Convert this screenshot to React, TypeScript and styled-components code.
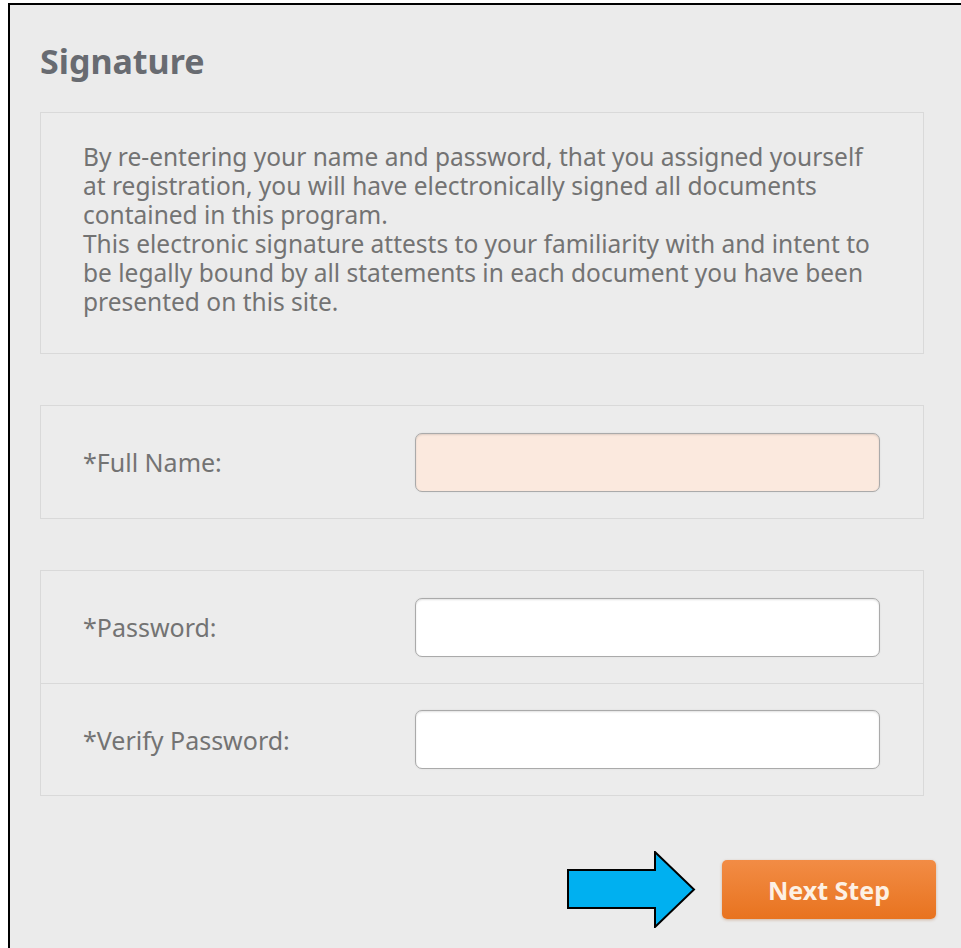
import styled, { createGlobalStyle } from 'styled-components'

const GlobalStyle = createGlobalStyle`
  html, body {
    margin: 0;
    padding: 0;
    background: #ffffff;
    overflow: hidden;
  }
  body {
    font-family: 'Noto Sans', 'Open Sans', 'Liberation Sans', sans-serif;
  }
`

const PANEL_BG = '#ebebeb'
const BOX_BG = '#ececec'
const BOX_BORDER = '#d9d9d9'
const TEXT = '#737373'

const Frame = styled.div`
  margin: 3px 0 0 8px;
  height: calc(100vh - 3px);
  box-sizing: border-box;
  border-top: 2px solid #000;
  border-left: 2px solid #000;
  background: ${PANEL_BG};
  padding: 36px 37px 0 30px;
  display: flex;
  flex-direction: column;
`

const Title = styled.h2`
  margin: 0 0 31px;
  font-size: 34px;
  line-height: 40px;
  font-weight: 700;
  color: #686b71;
`

const Box = styled.section`
  background: ${BOX_BG};
  border: 1px solid ${BOX_BORDER};
  margin-bottom: 51px;
`

const Notice = styled.div`
  padding: 29px 42px 37px;
  font-size: 24.5px;
  line-height: 29px;
  color: ${TEXT};
`

const Row = styled.div<{ $divider?: boolean }>`
  display: flex;
  align-items: center;
  height: 112px;
  box-sizing: border-box;
  padding: 0 43px 0 42px;
  border-top: ${(p) => (p.$divider ? `1px solid ${BOX_BORDER}` : 'none')};
`

const Label = styled.label`
  width: 332px;
  font-size: 25px;
  color: ${TEXT};
`

const Field = styled.input<{ $filled?: boolean }>`
  flex: 1;
  height: 59px;
  box-sizing: border-box;
  border: 1px solid #aaaaaa;
  border-radius: 7px;
  background: ${(p) => (p.$filled ? '#fbe9de' : '#ffffff')};
  box-shadow: inset 0 1px 2px rgba(0, 0, 0, 0.12),
    0 0 2px rgba(0, 0, 0, 0.08);
  outline: none;
`

const Footer = styled.div`
  display: flex;
  align-items: center;
  justify-content: flex-end;
  gap: 26px;
  margin: 4px -12px 0 0;
`

const NextButton = styled.button`
  width: 214px;
  height: 59px;
  border: none;
  border-radius: 5px;
  background: linear-gradient(#f28c45, #e8731f);
  box-shadow: 0 1px 3px rgba(160, 80, 20, 0.35);
  color: #fdf1e4;
  font-family: 'Noto Sans', 'Open Sans', sans-serif;
  font-size: 25px;
  font-weight: 700;
  cursor: pointer;
`

const Pointer = () => (
  <svg width="129" height="77" viewBox="0 0 129 77">
    <polygon
      points="1,19 88,19 88,1 127,38.5 88,76 88,57 1,57"
      fill="#00b0f0"
      stroke="#000"
      strokeWidth="2"
      strokeLinejoin="miter"
    />
  </svg>
)

export default function App() {
  return (
    <>
      <GlobalStyle />
      <Frame>
        <Title>Signature</Title>
        <Box>
          <Notice>
            By re-entering your name and password, that you assigned yourself
            at registration, you will have electronically signed all documents
            contained in this program.
            <br />
            This electronic signature attests to your familiarity with and
            intent to be legally bound by all statements in each document you
            have been presented on this site.
          </Notice>
        </Box>
        <Box>
          <Row>
            <Label>*Full Name:</Label>
            <Field $filled />
          </Row>
        </Box>
        <Box>
          <Row>
            <Label>*Password:</Label>
            <Field type="password" />
          </Row>
          <Row $divider>
            <Label>*Verify Password:</Label>
            <Field type="password" />
          </Row>
        </Box>
        <Footer>
          <Pointer />
          <NextButton type="button">Next Step</NextButton>
        </Footer>
      </Frame>
    </>
  )
}
